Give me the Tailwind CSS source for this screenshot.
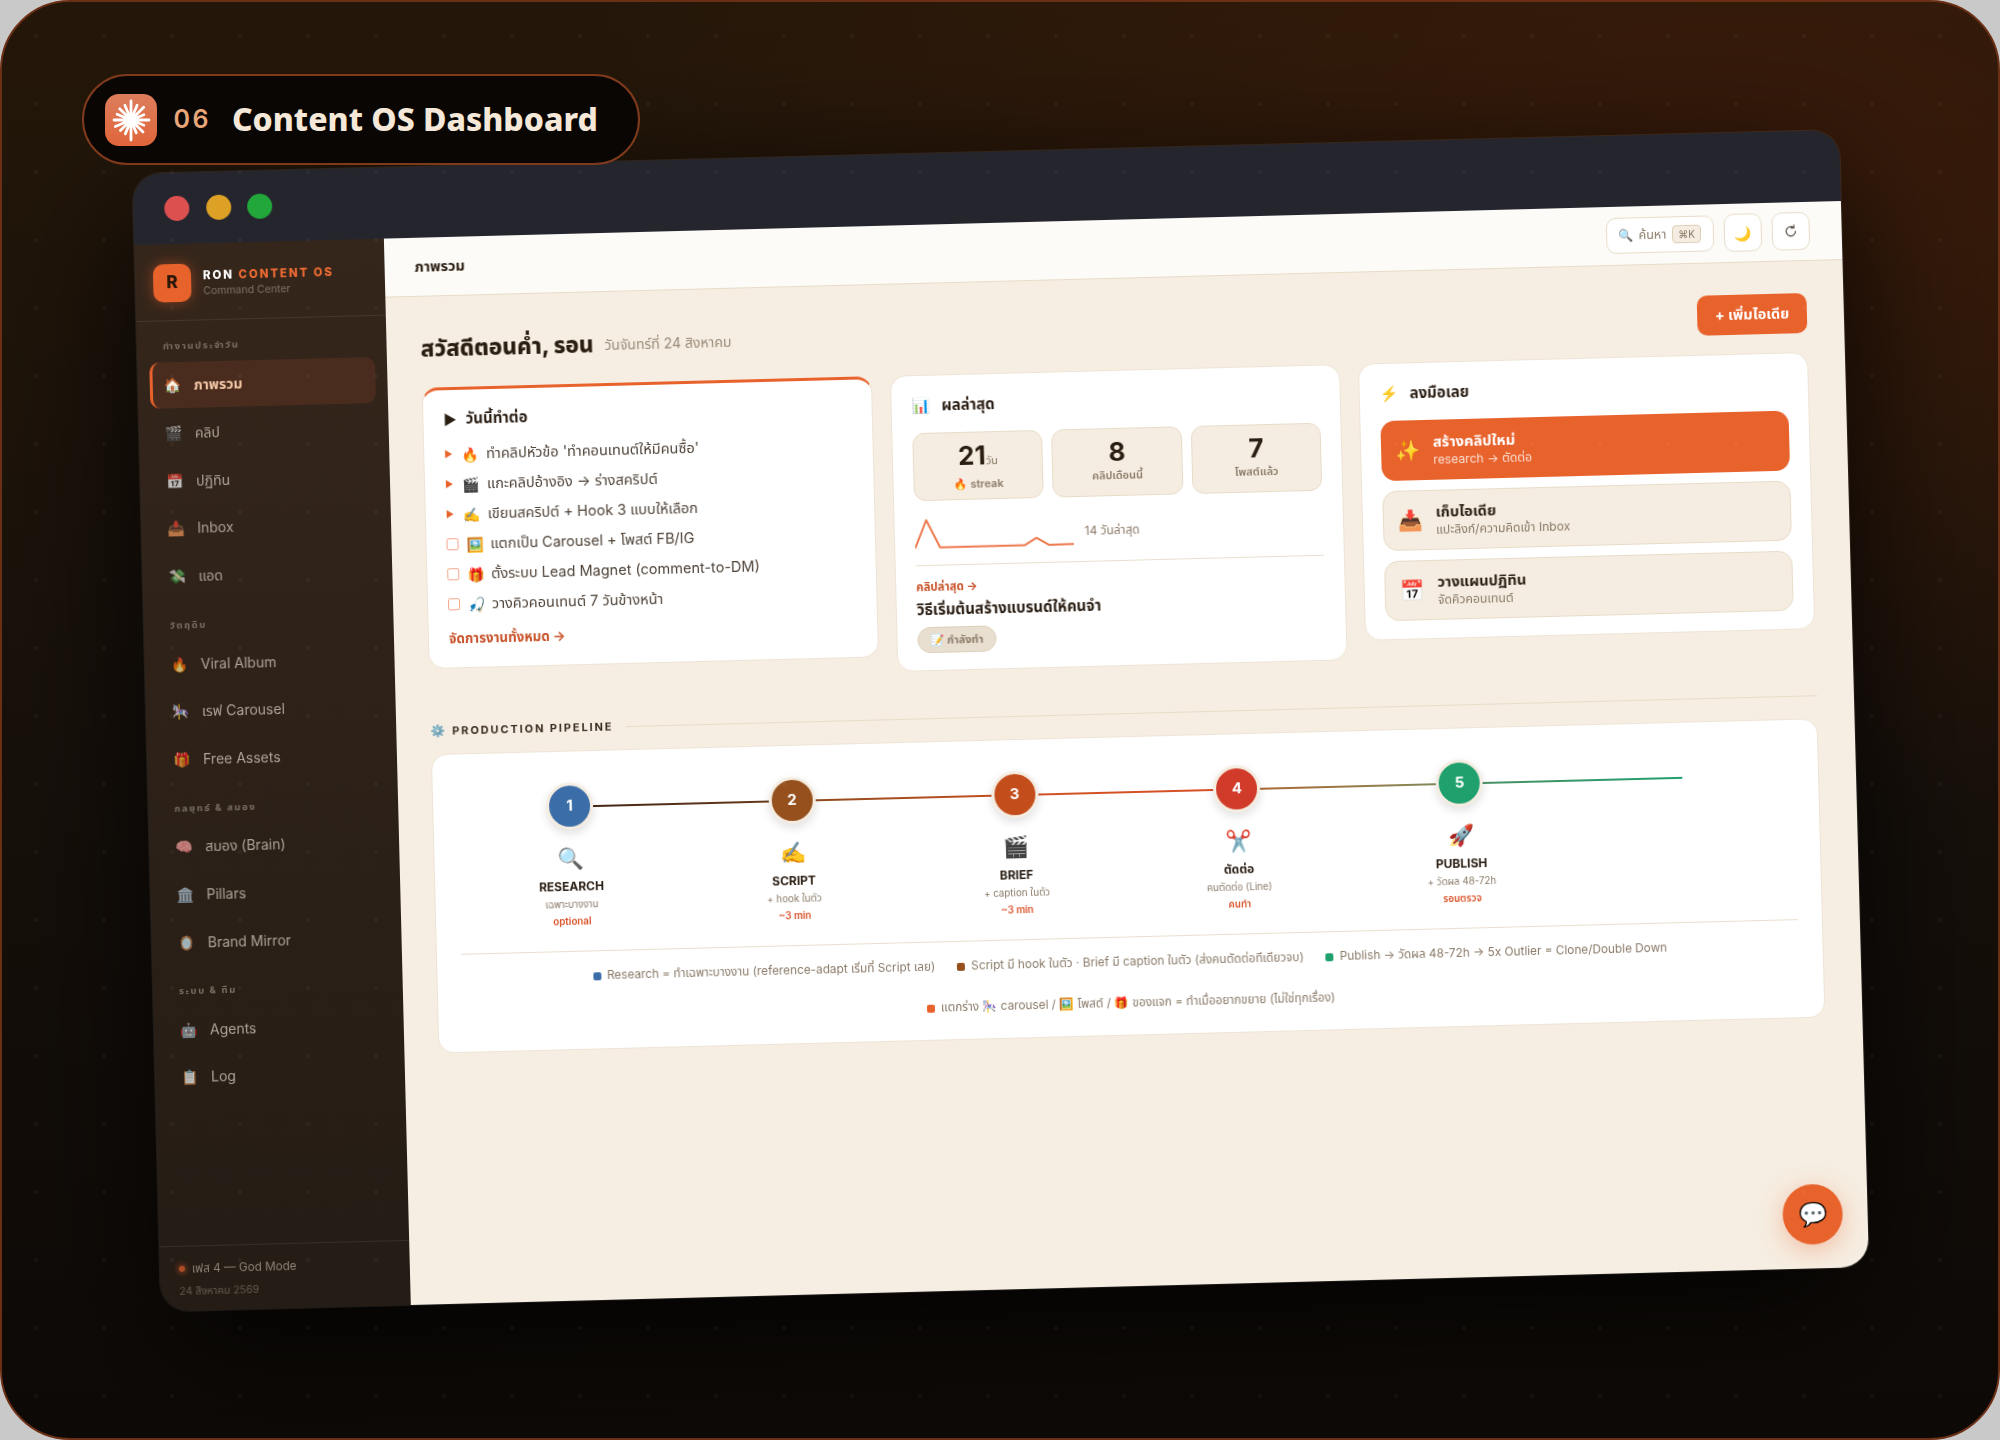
<!DOCTYPE html>
<html lang="th">
<head>
<meta charset="UTF-8" />
<title>Content OS Dashboard</title>
<script src="https://cdn.jsdelivr.net/npm/@tailwindcss/browser@4"></script>
</head>
<body class="bg-[#c9c9c9] [font-family:Inter,'Noto_Sans_Thai',sans-serif]">
<div class="relative w-[2000px] h-[1440px] overflow-hidden rounded-[70px] border-2 border-[#6b2f15] bg-[radial-gradient(ellipse_60%_45%_at_88%_12%,rgba(72,30,10,0.6),transparent_100%),linear-gradient(180deg,#241709_0%,#17100a_50%,#0d0906_100%)]">

  <!-- window, placed on the canvas with a slight tilt -->
  <div class="absolute left-0 top-0 w-[1710px] h-[1136px] origin-top-left [transform:matrix3d(0.998389,-0.0257,0,0.00000023691,0.024963,1.000298,0,-0.00000077935,0,0,1,0,130.5,172,0,1)] rounded-[28px] overflow-hidden flex flex-col shadow-[0_0_0_1px_rgba(255,255,255,0.08),0_40px_140px_rgba(0,0,0,0.85)]">
    <!-- title bar -->
    <div class="h-[71px] shrink-0 bg-[#25252e] flex items-center gap-[16.5px] pl-[31px]">
      <span class="w-[25px] h-[25px] rounded-full bg-[#dc5050]"></span>
      <span class="w-[25px] h-[25px] rounded-full bg-[#dda125]"></span>
      <span class="w-[25px] h-[25px] rounded-full bg-[#22a83a]"></span>
    </div>

    <div class="flex flex-1 min-h-0">
      <!-- sidebar -->
      <aside class="w-[250px] shrink-0 flex flex-col bg-[linear-gradient(180deg,#35261b,#241c15)]">
        <div class="h-[77px] shrink-0 flex items-center gap-[12px] pl-[18px] pt-[2px] border-b border-white/8">
          <div class="w-[38px] h-[38px] rounded-[10px] bg-[#e8622c] flex items-center justify-center text-[17px] font-extrabold text-[#2a1608] shadow-[0_0_14px_rgba(232,98,44,0.45)]">R</div>
          <div class="mt-[2px]">
            <div class="text-[11.5px] leading-[15px] font-extrabold tracking-[1.9px] text-white">RON <span class="text-[#ee6b33]">CONTENT OS</span></div>
            <div class="text-[10.5px] leading-[15px] text-[#7e7368]">Command Center</div>
          </div>
        </div>
        <nav class="px-[12px] pt-[18px] text-[14px] text-[#ada398]">
          <div class="h-[14px] leading-[14px] pl-[14px] mb-[8.5px] text-[9.5px] font-bold tracking-[1.6px] text-[#7a6f63]">ทำงานประจำวัน</div>
          <div class="flex flex-col gap-[1.75px]">
            <a class="h-[46px] flex items-center gap-[13px] pl-[10px] border-l-[3px] border-[#e8622c] rounded-[10px] bg-[#4a2c1e] font-bold text-[#f4c9a8]"><span class="w-[18px] text-center">🏠</span>ภาพรวม</a>
            <a class="h-[46px] flex items-center gap-[13px] pl-[13px]"><span class="w-[18px] text-center opacity-70">🎬</span>คลิป</a>
            <a class="h-[46px] flex items-center gap-[13px] pl-[13px]"><span class="w-[18px] text-center opacity-70">📅</span>ปฏิทิน</a>
            <a class="h-[46px] flex items-center gap-[13px] pl-[13px]"><span class="w-[18px] text-center opacity-70">📥</span>Inbox</a>
            <a class="h-[46px] flex items-center gap-[13px] pl-[13px]"><span class="w-[18px] text-center opacity-70">💸</span>แอด</a>
          </div>
          <div class="h-[14px] leading-[14px] pl-[14px] mt-[19.5px] mb-[8px] text-[9.5px] font-bold tracking-[1.6px] text-[#7a6f63]">วัตถุดิบ</div>
          <div class="flex flex-col gap-[1.75px]">
            <a class="h-[46px] flex items-center gap-[13px] pl-[13px]"><span class="w-[18px] text-center opacity-70">🔥</span>Viral Album</a>
            <a class="h-[46px] flex items-center gap-[13px] pl-[13px]"><span class="w-[18px] text-center opacity-70">🎠</span>เรฟ Carousel</a>
            <a class="h-[46px] flex items-center gap-[13px] pl-[13px]"><span class="w-[18px] text-center opacity-70">🎁</span>Free Assets</a>
          </div>
          <div class="h-[14px] leading-[14px] pl-[14px] mt-[19px] mb-[8px] text-[9.5px] font-bold tracking-[1.6px] text-[#7a6f63]">กลยุทธ์ &amp; สมอง</div>
          <div class="flex flex-col gap-[1.75px]">
            <a class="h-[46px] flex items-center gap-[13px] pl-[13px]"><span class="w-[18px] text-center opacity-70">🧠</span>สมอง (Brain)</a>
            <a class="h-[46px] flex items-center gap-[13px] pl-[13px]"><span class="w-[18px] text-center opacity-70">🏛️</span>Pillars</a>
            <a class="h-[46px] flex items-center gap-[13px] pl-[13px]"><span class="w-[18px] text-center opacity-70">🪞</span>Brand Mirror</a>
          </div>
          <div class="h-[14px] leading-[14px] pl-[14px] mt-[19px] mb-[8px] text-[9.5px] font-bold tracking-[1.6px] text-[#7a6f63]">ระบบ &amp; ทีม</div>
          <div class="flex flex-col gap-[1.75px]">
            <a class="h-[46px] flex items-center gap-[13px] pl-[13px]"><span class="w-[18px] text-center opacity-70">🤖</span>Agents</a>
            <a class="h-[46px] flex items-center gap-[13px] pl-[13px]"><span class="w-[18px] text-center opacity-70">📋</span>Log</a>
          </div>
        </nav>
        <div class="mt-auto h-[65px] border-t border-white/8 pl-[19px] pt-[14px] text-[11.7px] leading-[16px] text-[#8b8175]">
          <div class="flex items-center gap-[7px] mb-[7px]"><span class="w-[6px] h-[6px] rounded-full bg-[#e8622c]/70 shadow-[0_0_6px_#e8622c]"></span>เฟส 4 — God Mode</div>
          <div class="text-[10.5px] text-[#665d53]">24 สิงหาคม 2569</div>
        </div>
      </aside>

      <!-- main -->
      <main class="relative flex-1 min-w-0 bg-[#f6eee2] flex flex-col">
        <header class="h-[59px] shrink-0 bg-[#fdfbf7] border-b border-[#e8dcc8] flex items-center pl-[30px] pr-[32.5px]">
          <span class="text-[14.5px] font-bold text-[#2a1d12]">ภาพรวม</span>
          <div class="ml-auto flex items-center gap-[10px]">
            <div class="w-[108px] h-[36px] bg-white border border-[#e8dcc8] rounded-[10px] flex items-center pl-[11px] gap-[6px] text-[12.5px] text-[#8a7a68]">
              <span class="text-[12px]">🔍</span>ค้นหา
              <span class="h-[18px] px-[5px] rounded-[4px] bg-[#f5ede1] border border-[#dccfb9] text-[10px] leading-[16px]">⌘K</span>
            </div>
            <div class="w-[38px] h-[38px] bg-white border border-[#e8dcc8] rounded-[10px] flex items-center justify-center text-[14px]">🌙</div>
            <div class="w-[38px] h-[38px] bg-white border border-[#e8dcc8] rounded-[10px] flex items-center justify-center">
              <svg width="14" height="14" viewBox="0 0 24 24" fill="none" stroke="#4f4338" stroke-width="2" stroke-linecap="round"><path d="M20 12a8 8 0 1 1-3-6.2"/><path d="M17.5 1.5v4.8h-4.8" stroke-linejoin="round"/></svg>
            </div>
          </div>
        </header>

        <div class="pl-[34px] pr-[37px] pt-[32px]">
          <div class="h-[40px] flex items-center mb-[19px]">
            <h1 class="text-[22.5px] font-extrabold text-[#2a1d12]">สวัสดีตอนค่ำ, รอน</h1>
            <span class="ml-[11px] text-[14px] text-[#9a8b7a]">วันจันทร์ที่ 24 สิงหาคม</span>
            <button class="ml-auto w-[110px] h-[40px] rounded-[10px] bg-[#e8622c] text-white text-[14.5px] font-bold">+ เพิ่มไอเดีย</button>
          </div>

          <div class="grid grid-cols-3 gap-[18px] items-start">
            <!-- today -->
            <section class="h-[281px] bg-white border border-[#eee4d5] border-t-[3px] border-t-[#e8622c] rounded-[16px] px-[20px] pt-[19px]">
              <h2 class="h-[20px] flex items-center gap-[9px] text-[15px] font-bold text-[#2a1d12] mb-[10px]"><span class="text-[14px]">▶</span>วันนี้ทำต่อ</h2>
              <ul class="text-[14.5px] text-[#4f4338]">
                <li class="h-[30px] flex items-center"><span class="w-[12px] text-[9px] text-[#e8622c]">▶</span><span class="w-[25px] ml-[5px] text-[14px]">🔥</span>ทำคลิปหัวข้อ 'ทำคอนเทนต์ให้มีคนซื้อ'</li>
                <li class="h-[30px] flex items-center"><span class="w-[12px] text-[9px] text-[#e8622c]">▶</span><span class="w-[25px] ml-[5px] text-[14px]">🎬</span>แกะคลิปอ้างอิง → ร่างสคริปต์</li>
                <li class="h-[30px] flex items-center"><span class="w-[12px] text-[9px] text-[#e8622c]">▶</span><span class="w-[25px] ml-[5px] text-[14px]">✍️</span>เขียนสคริปต์ + Hook 3 แบบให้เลือก</li>
                <li class="h-[30px] flex items-center"><span class="w-[12px] h-[12px] border border-[#f3a78c] rounded-[2px]"></span><span class="w-[24px] ml-[8px] text-[14px]">🖼️</span>แตกเป็น Carousel + โพสต์ FB/IG</li>
                <li class="h-[30px] flex items-center"><span class="w-[12px] h-[12px] border border-[#f3a78c] rounded-[2px]"></span><span class="w-[24px] ml-[8px] text-[14px]">🎁</span>ตั้งระบบ Lead Magnet (comment-to-DM)</li>
                <li class="h-[30px] flex items-center"><span class="w-[12px] h-[12px] border border-[#f3a78c] rounded-[2px]"></span><span class="w-[24px] ml-[8px] text-[14px]">🎣</span>วางคิวคอนเทนต์ 7 วันข้างหน้า</li>
              </ul>
              <a class="block mt-[10px] text-[13.4px] leading-[18px] font-bold text-[#c9532a]">จัดการงานทั้งหมด →</a>
            </section>

            <!-- results -->
            <section class="h-[296px] bg-white border border-[#eee4d5] rounded-[16px] px-[20px] pt-[20px]">
              <h2 class="h-[20px] flex items-center gap-[11px] text-[15px] font-bold text-[#2a1d12] mb-[17px]"><span class="text-[15px]">📊</span>ผลล่าสุด</h2>
              <div class="grid grid-cols-3 gap-[9px] mb-[18px]">
                <div class="h-[68px] rounded-[12px] bg-[#f5ede1] border border-[#e8dcc8] flex flex-col items-center pt-[8px]">
                  <div class="text-[26px] leading-[30px] font-bold text-[#2a1d12]">21<span class="text-[11px] font-normal text-[#8a7a68]">วัน</span></div>
                  <div class="text-[11px] font-semibold text-[#8a7a68]">🔥 streak</div>
                </div>
                <div class="h-[68px] rounded-[12px] bg-[#f5ede1] border border-[#e8dcc8] flex flex-col items-center pt-[8px]">
                  <div class="text-[26px] leading-[30px] font-bold text-[#2a1d12]">8</div>
                  <div class="text-[11px] font-semibold text-[#8a7a68]">คลิปเดือนนี้</div>
                </div>
                <div class="h-[68px] rounded-[12px] bg-[#f5ede1] border border-[#e8dcc8] flex flex-col items-center pt-[8px]">
                  <div class="text-[26px] leading-[30px] font-bold text-[#2a1d12]">7</div>
                  <div class="text-[11px] font-semibold text-[#8a7a68]">โพสต์แล้ว</div>
                </div>
              </div>
              <div class="flex items-center gap-[10px] h-[32px] mb-[14px]">
                <svg width="160" height="32" viewBox="0 0 160 32" fill="none" stroke="#ee7a4e" stroke-width="2" stroke-linejoin="round"><path d="M0 29.2L11.7 1.2L25 28.8L110 28.7L121.7 21.7L134.3 29.1L159 28.7"/></svg>
                <span class="text-[12px] text-[#8a7a68]">14 วันล่าสุด</span>
              </div>
              <div class="border-t border-[#eadfce] pt-[12px]">
                <div class="text-[11.5px] leading-[18px] font-bold text-[#c9532a]">คลิปล่าสุด →</div>
                <div class="text-[15px] leading-[24px] mt-[2px] font-bold text-[#2a1d12]">วิธีเริ่มต้นสร้างแบรนด์ให้คนจำ</div>
                <span class="inline-flex items-center gap-[4px] h-[26px] px-[12px] mt-[5px] rounded-full bg-[#e9dfd0] border border-[#dccfb9] text-[11px] font-bold text-[#8a7a68]">📝 กำลังทำ</span>
              </div>
            </section>

            <!-- actions -->
            <section class="h-[277px] bg-white border border-[#eee4d5] rounded-[16px] px-[20px] pt-[20px]">
              <h2 class="h-[20px] flex items-center gap-[11px] text-[15px] font-bold text-[#2a1d12] mb-[17px]"><span class="text-[15px]">⚡</span>ลงมือเลย</h2>
              <div class="flex flex-col gap-[10px]">
                <a class="h-[60px] rounded-[14px] bg-[#e8622c] flex items-center pl-[13.5px] gap-[13.5px]"><span class="text-[20px]">✨</span><div><div class="text-[14.7px] leading-[19px] font-bold text-white">สร้างคลิปใหม่</div><div class="text-[12.2px] leading-[16px] text-white/80">research → ตัดต่อ</div></div></a>
                <a class="h-[60px] rounded-[14px] bg-[#f5ede1] border border-[#e8dcc8] flex items-center pl-[13.5px] gap-[13.5px]"><span class="text-[20px]">📥</span><div><div class="text-[14.7px] leading-[19px] font-bold text-[#2a1d12]">เก็บไอเดีย</div><div class="text-[12.2px] leading-[16px] text-[#8a7a68]">แปะลิงก์/ความคิดเข้า Inbox</div></div></a>
                <a class="h-[60px] rounded-[14px] bg-[#f5ede1] border border-[#e8dcc8] flex items-center pl-[13.5px] gap-[13.5px]"><span class="text-[20px]">📅</span><div><div class="text-[14.7px] leading-[19px] font-bold text-[#2a1d12]">วางแผนปฏิทิน</div><div class="text-[12.2px] leading-[16px] text-[#8a7a68]">จัดคิวคอนเทนต์</div></div></a>
              </div>
            </section>
          </div>

          <!-- pipeline -->
          <div class="flex items-center gap-[7px] h-[14px] mt-[40px] mb-[16px]">
            <span class="text-[12px]">⚙️</span>
            <span class="text-[11px] font-bold tracking-[1.9px] text-[#3b2c20]">PRODUCTION PIPELINE</span>
            <span class="flex-1 ml-[6px] border-t border-[#e8dcc8]"></span>
          </div>
          <section class="h-[299px] bg-white border border-[#eee4d5] rounded-[16px] px-[25px] pt-[31px]">
            <div class="grid grid-cols-6">
              <div class="relative flex flex-col items-center">
                <span class="absolute left-1/2 top-[23px] w-full h-[2px] bg-[linear-gradient(90deg,#3f2413,#6b3b1c)]"></span>
                <span class="relative w-[47px] h-[47px] rounded-full bg-[#3b6ea8] border-[3px] border-[#f5ede1] shadow-[0_4px_10px_rgba(0,0,0,0.12)] flex items-center justify-center text-[15px] font-bold text-white">1</span>
                <span class="mt-[16px] h-[26px] leading-[26px] text-[21px]">🔍</span>
                <span class="mt-[7px] text-[12px] leading-[16px] font-bold text-[#2a1d12]">RESEARCH</span>
                <span class="mt-[2px] text-[9.8px] leading-[15px] text-[#8a7a68]">เฉพาะบางงาน</span>
                <span class="mt-[2px] text-[9.8px] leading-[15px] font-semibold text-[#d9532a]">optional</span>
              </div>
              <div class="relative flex flex-col items-center">
                <span class="absolute left-1/2 top-[23px] w-full h-[2px] bg-[linear-gradient(90deg,#8a4a20,#c8501e)]"></span>
                <span class="relative w-[47px] h-[47px] rounded-full bg-[#96501e] border-[3px] border-[#f5ede1] shadow-[0_4px_10px_rgba(0,0,0,0.12)] flex items-center justify-center text-[15px] font-bold text-white">2</span>
                <span class="mt-[16px] h-[26px] leading-[26px] text-[21px]">✍️</span>
                <span class="mt-[7px] text-[12px] leading-[16px] font-bold text-[#2a1d12]">SCRIPT</span>
                <span class="mt-[2px] text-[9.8px] leading-[15px] text-[#8a7a68]">+ hook ในตัว</span>
                <span class="mt-[2px] text-[9.8px] leading-[15px] font-semibold text-[#d9532a]">~3 min</span>
              </div>
              <div class="relative flex flex-col items-center">
                <span class="absolute left-1/2 top-[23px] w-full h-[2px] bg-[linear-gradient(90deg,#d0521f,#d8502a)]"></span>
                <span class="relative w-[47px] h-[47px] rounded-full bg-[#c44d1c] border-[3px] border-[#f5ede1] shadow-[0_4px_10px_rgba(0,0,0,0.12)] flex items-center justify-center text-[15px] font-bold text-white">3</span>
                <span class="mt-[16px] h-[26px] leading-[26px] text-[21px]">🎬</span>
                <span class="mt-[7px] text-[12px] leading-[16px] font-bold text-[#2a1d12]">BRIEF</span>
                <span class="mt-[2px] text-[9.8px] leading-[15px] text-[#8a7a68]">+ caption ในตัว</span>
                <span class="mt-[2px] text-[9.8px] leading-[15px] font-semibold text-[#d9532a]">~3 min</span>
              </div>
              <div class="relative flex flex-col items-center">
                <span class="absolute left-1/2 top-[23px] w-full h-[2px] bg-[linear-gradient(90deg,#b0632e,#7f8f5f)]"></span>
                <span class="relative w-[47px] h-[47px] rounded-full bg-[#d13c2a] border-[3px] border-[#f5ede1] shadow-[0_4px_10px_rgba(0,0,0,0.12)] flex items-center justify-center text-[15px] font-bold text-white">4</span>
                <span class="mt-[16px] h-[26px] leading-[26px] text-[21px]">✂️</span>
                <span class="mt-[7px] text-[12px] leading-[16px] font-bold text-[#2a1d12]">ตัดต่อ</span>
                <span class="mt-[2px] text-[9.8px] leading-[15px] text-[#8a7a68]">คนตัดต่อ (Line)</span>
                <span class="mt-[2px] text-[9.8px] leading-[15px] font-semibold text-[#d9532a]">คนทำ</span>
              </div>
              <div class="relative flex flex-col items-center">
                <span class="absolute left-1/2 top-[23px] w-full h-[2px] bg-[linear-gradient(90deg,#4f8f66,#1fa06c)]"></span>
                <span class="relative w-[47px] h-[47px] rounded-full bg-[#1fa06c] border-[3px] border-[#f5ede1] shadow-[0_4px_10px_rgba(0,0,0,0.12)] flex items-center justify-center text-[15px] font-bold text-white">5</span>
                <span class="mt-[16px] h-[26px] leading-[26px] text-[21px]">🚀</span>
                <span class="mt-[7px] text-[12px] leading-[16px] font-bold text-[#2a1d12]">PUBLISH</span>
                <span class="mt-[2px] text-[9.8px] leading-[15px] text-[#8a7a68]">+ วัดผล 48-72h</span>
                <span class="mt-[2px] text-[9.8px] leading-[15px] font-semibold text-[#d9532a]">รอนตรวจ</span>
              </div>
            </div>
            <div class="mt-[22px] -mx-[1px] border-t border-[#eadfce] pt-[16px] flex flex-wrap justify-center gap-x-[22px] gap-y-[24px] text-[11.8px] leading-[17px] text-[#8a7a68]">
              <span class="flex items-center gap-[6px]"><i class="w-[8px] h-[8px] rounded-[2px] bg-[#3b6ea8]"></i>Research = ทำเฉพาะบางงาน (reference-adapt เริ่มที่ Script เลย)</span>
              <span class="flex items-center gap-[6px]"><i class="w-[8px] h-[8px] rounded-[2px] bg-[#96501e]"></i>Script มี hook ในตัว · Brief มี caption ในตัว (ส่งคนตัดต่อทีเดียวจบ)</span>
              <span class="flex items-center gap-[6px]"><i class="w-[8px] h-[8px] rounded-[2px] bg-[#1fa06c]"></i>Publish → วัดผล 48-72h → 5x Outlier = Clone/Double Down</span>
              <span class="flex items-center gap-[6px]"><i class="w-[8px] h-[8px] rounded-[2px] bg-[#e8622c]"></i>แตกร่าง 🎠 carousel / 🖼️ โพสต์ / 🎁 ของแจก = ทำเมื่ออยากขยาย (ไม่ใช่ทุกเรื่อง)</span>
            </div>
          </section>
        </div>

        <button class="absolute right-[25px] bottom-[24px] w-[60px] h-[60px] rounded-full bg-[#e8622c] text-[23px] shadow-[0_6px_24px_rgba(232,98,44,0.35)]">💬</button>
      </main>
    </div>
  </div>

  <!-- dot texture over everything -->
  <div class="absolute inset-0 pointer-events-none bg-[radial-gradient(circle,rgba(255,255,255,0.035)_2px,transparent_2.5px)] bg-[size:68px_68px]"></div>

  <!-- label pill -->
  <div class="absolute left-[80px] top-[72px] w-[558px] h-[91px] rounded-full bg-[#0a0604] border-2 border-[#7f3a1c] flex items-center pl-[21px]">
    <div class="w-[52px] h-[52px] rounded-[14px] bg-[linear-gradient(180deg,#dc7d5c,#e0653a)] flex items-center justify-center">
      <svg width="44" height="44" viewBox="-22 -22 44 44" fill="none" stroke="#fff" stroke-width="2.8" stroke-linecap="round"><path d="M0 0L18 0M0 0L12.9 5.3M0 0L12 12M0 0L5.3 12.9M0 0L0 20M0 0L-5.7 13.9M0 0L-10.6 10.6M0 0L-15.7 6.5M0 0L-17 0M0 0L-13.9 -5.7M0 0L-11.3 -11.3M0 0L-6.1 -14.8M0 0L0 -19M0 0L6.1 -14.8M0 0L12.7 -12.7M0 0L12.9 -5.3"/><circle r="4" fill="#fff" stroke="none"/></svg>
    </div>
    <span class="ml-[16.5px] text-[25px] font-semibold tracking-[2.5px] text-[#e8a679]">06</span>
    <span class="ml-[21px] text-[32px] font-extrabold leading-[40px] -mt-[2px] text-[#f6e8d8] [font-family:'Noto_Sans',sans-serif]">Content OS Dashboard</span>
  </div>
</div>
</body>
</html>
